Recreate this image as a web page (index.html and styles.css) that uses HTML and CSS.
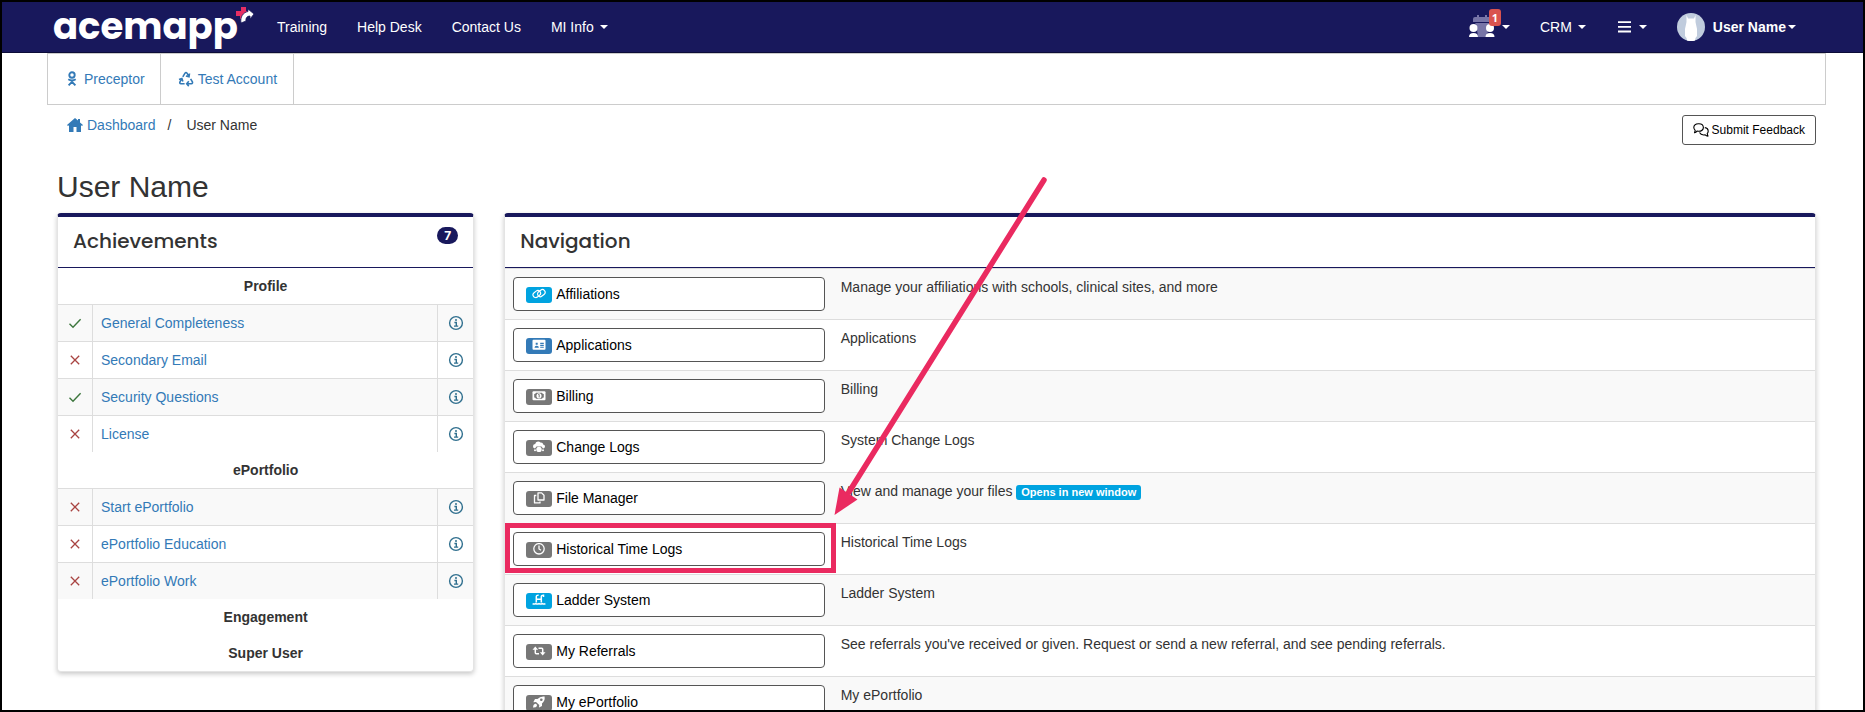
FILE: index.html
```html
<!DOCTYPE html>
<html lang="en">
<head>
<meta charset="utf-8">
<title>User Name - ACEMAPP</title>
<link rel="stylesheet" href="styles.css">
</head>
<body>
<svg class="sprite" aria-hidden="true">
  <symbol id="check" viewBox="0 0 14 14"><path d="M1.5 7.8 5 11.2 12.6 3.2" fill="none" stroke="currentColor" stroke-width="1.4"/></symbol>
  <symbol id="cross" viewBox="0 0 14 14"><path d="M2.8 2.8 11.2 11.2M11.2 2.8 2.8 11.2" fill="none" stroke="currentColor" stroke-width="1.3"/></symbol>
  <symbol id="info" viewBox="0 0 16 16"><g fill="none" stroke="currentColor" stroke-width="1.4"><circle cx="8" cy="8" r="6.4"/><path d="M6.4 7.5H8.3V11M6 11.1H10.2"/></g><circle cx="8" cy="5" r="1" fill="currentColor"/></symbol>
</svg>
<div class="page">
  <nav class="navbar">
    <a class="brand" href="#" aria-label="acemapp"><span>acemapp</span><svg width="18" height="16" viewBox="0 0 18 16"><path d="M5 0h5v4h3v3H9v5H4V9H0V4h5z" fill="#e62e63"/><path d="M5 16C4 10 7 5.500 12 4.500V2l6 5-4 5V9C11 9 9.500 11 10 14z" fill="#fff" stroke="#18185c" stroke-width=".8"/></svg></a>
    <div class="menu">
      <a href="#">Training</a><a href="#">Help Desk</a><a href="#">Contact Us</a><a href="#">MI Info <i class="caret"></i></a>
    </div>
    <div class="menu menu-right">
      <a class="meetings" href="#" aria-label="Meetings"><svg width="28" height="24" viewBox="0 0 28 24"><path d="M5 4Q5 2 7 2h2V0h2v2h6V0h2v2h2q2 0 2 2v3H5zM7 8h15q-4 3-2 7l-1 7H10L9 15q1-4-2-7z" fill="#7775a7"/><g fill="#fff"><circle cx="5.500" cy="13" r="4"/><path d="M1 22q0-4 4.500-4t4.500 4z"/><circle cx="22" cy="13" r="4"/><path d="M17.500 22q0-4 4.500-4t4.500 4z"/></g></svg><span class="count">1</span><i class="caret"></i></a>
      <a href="#">CRM <i class="caret"></i></a>
      <a class="bars" href="#" aria-label="More"><svg width="13" height="12" viewBox="0 0 13 12"><path d="M0 1.200h13M0 5.800h13M0 10.500h13" stroke="#fff" stroke-width="1.800"/></svg><i class="caret"></i></a>
      <a class="account" href="#"><svg width="28" height="28" viewBox="0 0 28 28"><circle cx="14" cy="14" r="14" fill="#c0ccdd"/><path d="M9.500 2v7L8 16v7q2 1.500 2 4.500 4 1 8 0 0-3 2-4.500v-7L18.500 9V2L17 5.500h-6z" fill="#fff"/></svg><b>User Name</b><i class="caret"></i></a>
    </div>
  </nav>
  <main class="content">
    <div class="tabs">
      <a href="#"><svg width="18" height="16" viewBox="0 0 18 16"><g fill="none" stroke="currentColor" stroke-width="1.900"><circle cx="9" cy="4" r="2.700"/><path d="M5.300 8.300Q9 10.800 12.700 8.300M9 9.600v1M5.600 14.300 9 10.800l3.400 3.500"/></g></svg>Preceptor</a>
      <a href="#"><svg width="18" height="16" viewBox="0 0 18 16"><g fill="none" stroke="currentColor" stroke-width="1.600"><path d="M5.800 5.800 8 2.200q1-1.400 2 0l1.800 3M12.500 2.500 12 5.800 8.900 5M13.600 7.800l1.800 3q.6 1.700-1.100 1.900H10M11.800 10.300 9.700 12.700l2.100 2.400M7.600 12.700H4q-1.800-.2-1-1.900l1.700-2.900M2 8.600l2.900-1 1 3"/></g></svg>Test Account</a>
    </div>
    <div class="toolbar">
      <div class="crumbs">
        <a href="#"><svg width="16" height="14" viewBox="0 0 16 14"><path d="M8 0 0 7l1 1 1-.7V14h4.500V9h3v5H14V7.300l1 .7 1-1-3-2.600V1h-2v1.600z" fill="currentColor"/></svg>Dashboard</a><span>/</span><span>User Name</span>
      </div>
      <button class="feedback" type="button"><svg width="16" height="14" viewBox="0 0 16 14"><g fill="none" stroke="currentColor" stroke-width="1.100" stroke-linejoin="round"><path d="M1.500 9.800 2.200 7.300Q.8 6 .8 4.600.8 1 5.500.8t4.900 3.800Q10.200 8.200 5.500 8.300L4 8.100Q3 9.400 1.500 9.800z"/><path d="M11.800 4.600q3.400.5 3.400 3.600 0 1.300-1 2.400l.8 2.500q-1.800-.2-2.800-1.300-4.200.7-5.700-2.200"/></g></svg>Submit Feedback</button>
    </div>
    <h1>User Name</h1>
    <div class="columns">
      <div class="col-side">
        <section class="panel">
          <header><h2>Achievements</h2><span class="pill">7</span></header>
          <table class="goals">
            <tbody>
              <tr><th colspan="3">Profile</th></tr>
              <tr class="odd"><td class="ok"><svg><use href="#check"/></svg></td><td><a href="#">General Completeness</a></td><td class="tip"><svg><use href="#info"/></svg></td></tr>
              <tr><td class="no"><svg><use href="#cross"/></svg></td><td><a href="#">Secondary Email</a></td><td class="tip"><svg><use href="#info"/></svg></td></tr>
              <tr class="odd"><td class="ok"><svg><use href="#check"/></svg></td><td><a href="#">Security Questions</a></td><td class="tip"><svg><use href="#info"/></svg></td></tr>
              <tr><td class="no"><svg><use href="#cross"/></svg></td><td><a href="#">License</a></td><td class="tip"><svg><use href="#info"/></svg></td></tr>
            </tbody>
            <tbody>
              <tr><th colspan="3">ePortfolio</th></tr>
              <tr class="odd"><td class="no"><svg><use href="#cross"/></svg></td><td><a href="#">Start ePortfolio</a></td><td class="tip"><svg><use href="#info"/></svg></td></tr>
              <tr><td class="no"><svg><use href="#cross"/></svg></td><td><a href="#">ePortfolio Education</a></td><td class="tip"><svg><use href="#info"/></svg></td></tr>
              <tr class="odd"><td class="no"><svg><use href="#cross"/></svg></td><td><a href="#">ePortfolio Work</a></td><td class="tip"><svg><use href="#info"/></svg></td></tr>
            </tbody>
            <tbody>
              <tr><th colspan="3">Engagement</th></tr>
              <tr><th colspan="3">Super User</th></tr>
            </tbody>
          </table>
        </section>
      </div>
      <div class="col-main">
        <section class="panel">
          <header><h2>Navigation</h2></header>
          <table class="links">
            <tbody>
              <tr><td><a class="btn" href="#"><span class="tag sky"><svg viewBox="0 0 14 12"><g fill="none" stroke="#fff" stroke-width="1.200"><rect x=".8" y="3.200" width="8" height="5.400" rx="2.700" transform="rotate(-38 5 6)"/><rect x="5.200" y="2.600" width="8" height="5.400" rx="2.700" transform="rotate(-38 9 5)"/></g></svg></span>Affiliations</a></td><td>Manage your affiliations with schools, clinical sites, and more</td></tr>
              <tr><td><a class="btn" href="#"><span class="tag blue"><svg viewBox="0 0 14 12"><rect x=".5" y=".7" width="13" height="10" rx="1" fill="#fff"/><path d="M3.700 3.800h2v2h-2zM2.500 8.700q0-1.900 2.200-1.900t2.200 1.900zM8.200 3.800h3.600v1.100H8.200zM8.200 5.800h3.600v1.100H8.200zM8.200 7.800h3.600v.9H8.200z" fill="#337ab7"/></svg></span>Applications</a></td><td>Applications</td></tr>
              <tr><td><a class="btn" href="#"><span class="tag"><svg viewBox="0 0 14 12"><rect x=".5" y="1.200" width="13" height="9" rx="1" fill="#fff"/><path d="M2.200 4Q3.500 4 4 2.800h6q.5 1.200 1.800 1.200v3.600q-1.300 0-1.800 1.200H4Q3.500 7.600 2.200 7.600z" fill="#777"/><ellipse cx="7" cy="5.800" rx="2.500" ry="2.600" fill="#fff"/><path d="M6.300 4.500H7.200V7.400" fill="none" stroke="#777"/></svg></span>Billing</a></td><td>Billing</td></tr>
              <tr><td><a class="btn" href="#"><span class="tag"><svg viewBox="0 0 14 12"><path d="M3 7.500Q.7 7 1 5t2.200-2Q3.500.4 6 .4q1.700 0 2.400 1.200Q11 1.300 11.200 3.500 13.300 4 13 5.800T11 7.500L9.500 5.600h-5z" fill="#fff"/><circle cx="7" cy="8.400" r="2.700" fill="#fff"/><circle cx="3" cy="9.300" r="1" fill="#fff"/><circle cx="11" cy="9.300" r="1" fill="#fff"/></svg></span>Change Logs</a></td><td>System Change Logs</td></tr>
              <tr><td><a class="btn" href="#"><span class="tag"><svg viewBox="0 0 14 12"><g fill="none" stroke="#fff" stroke-width="1.300" stroke-linejoin="round"><path d="M6 .9h3.600L12 3.200V8H6z"/><path d="M4.300 3.500H2.500v7.400H8V9.500"/></g></svg></span>File Manager</a></td><td>View and manage your files <span class="note">Opens in new window</span></td></tr>
              <tr><td class="target"><a class="btn" href="#"><span class="tag"><svg viewBox="0 0 14 12"><g fill="none" stroke="#fff" stroke-width="1.300"><circle cx="7" cy="5.800" r="5.200"/><path d="M7 2.600V6L9 7.300"/></g></svg></span>Historical Time Logs</a><svg class="arrow" width="220" height="345" viewBox="0 0 220 345" aria-hidden="true"><path d="M211 7 16 319" stroke="#ea2a60" stroke-width="5.500" stroke-linecap="round"/><path d="M1.500 342 6.500 314.500 24.500 326.500z" fill="#ea2a60"/></svg></td><td>Historical Time Logs</td></tr>
              <tr><td><a class="btn" href="#"><span class="tag sky"><svg viewBox="0 0 14 12"><path d="M4.300 8.500V2.800Q4.300 1 6.600 1.200M9.300 8.500V2.800Q9.300 1 11.500 1.200V3M4.300 5.300h5" fill="none" stroke="#fff" stroke-width="1.500"/><path d="M.6 9.600q1.600 1 3.200 0 1.600 1 3.200 0 1.600 1 3.200 0 1.600 1 3.200 0" fill="none" stroke="#fff" stroke-width="1.500"/></svg></span>Ladder System</a></td><td>Ladder System</td></tr>
              <tr><td><a class="btn" href="#"><span class="tag"><svg viewBox="0 0 14 12"><path d="M3.300 3v4.700q0 1 1 1H7M10.700 9V4.300q0-1-1-1H6.500" fill="none" stroke="#fff" stroke-width="1.500"/><path d="M.5 4.700 3.300 1.600l2.800 3.100zM7.900 7.300l2.800 3.100 2.800-3.100z" fill="#fff"/></svg></span>My Referrals</a></td><td>See referrals you've received or given. Request or send a new referral, and see pending referrals.</td></tr>
              <tr><td><a class="btn" href="#"><span class="tag"><svg viewBox="0 0 14 12"><path d="M12.600.5Q8 0 5.500 3H3L1.300 6.300 4 6 7.300 9 7 11.600 10 10V7.500Q13.200 4.800 12.600.5zM1 11.500Q1 8.300 3 7.800T5 10Q4 11.600 1 11.500z" fill="#fff"/><circle cx="9.300" cy="3.800" r="1.300" fill="#777"/></svg></span>My ePortfolio</a></td><td>My ePortfolio</td></tr>
            </tbody>
          </table>
        </section>
      </div>
    </div>
  </main>
</div>
</body>
</html>
```
FILE: styles.css
```css
* { box-sizing: border-box; }
body {
  margin: 0;
  background: #fff;
  color: #333;
  font: 14px/20px "Liberation Sans", Arial, sans-serif;
}
a { color: #337ab7; text-decoration: none; }
svg { flex: none; }
.sprite { position: absolute; width: 0; height: 0; }
.page { height: 100vh; overflow: hidden; border: 2px solid #000; }

.navbar {
  display: flex;
  height: 51px;
  padding: 0 52px 0 51px;
  background: #18185c;
  border-bottom: 1px solid #0c0c38;
}
.brand {
  display: flex;
  align-items: flex-start;
  width: 202px;
  color: #fff;
  font: 700 37px/48px Poppins, Inter, sans-serif;
}
.brand svg { margin: 5px 0 0 -2px; }
.menu { display: flex; align-items: center; margin-left: 7px; }
.menu a { display: flex; align-items: center; padding: 0 15px; color: #fff; }
.menu-right { margin-left: auto; }
.caret {
  margin-left: 6px;
  border: 4px solid transparent;
  border-top-color: currentColor;
  border-bottom: 0;
}
.meetings { position: relative; }
.count {
  position: absolute;
  left: 36px;
  top: -6px;
  width: 12px;
  border-radius: 3px;
  background: #d9534f;
  font: 700 11px/17px "Open Sans", sans-serif;
  text-align: center;
}
.bars { gap: 2px; margin-left: 2px; }
.menu .account { padding-left: 15px; }
.account .caret { margin-left: 2px; }
.account b { margin-left: 8px; }

.content { padding: 0 32px 0 40px; }
.tabs {
  display: flex;
  height: 52px;
  margin: 0 5px;
  border: 1px solid #ccc;
}
.tabs a {
  display: flex;
  align-items: center;
  gap: 3px;
  padding: 0 15px;
  border-right: 1px solid #ccc;
}
.tabs a + a { padding: 0 16px; }
.toolbar {
  display: flex;
  justify-content: space-between;
  padding: 10px 15px 25px;
}
.crumbs { display: flex; padding-left: 10px; }
.crumbs a { display: flex; align-items: center; gap: 4px; height: 20px; }
.crumbs span:nth-child(2) { margin: 0 15px 0 12px; }
.feedback {
  display: flex;
  align-items: center;
  gap: 3px;
  height: 30px;
  padding: 0 10px;
  border: 1px solid #555;
  border-radius: 3px;
  background: #fff;
  color: #000;
  font: 12px/18px "Liberation Sans", Arial, sans-serif;
}
h1 { margin: 0 15px 10px; font-size: 30px; line-height: 33px; font-weight: 400; }

.columns { display: flex; }
.col-side { width: 25%; padding: 0 15px; }
.col-main { width: 75%; padding: 0 15px; }
.panel {
  border: 1px solid #e4e4e4;
  border-top: 4px solid #18185c;
  border-radius: 4px;
  background: #fff;
  box-shadow: 0 2px 5px rgba(0, 0, 0, .22);
}
.panel header {
  display: flex;
  justify-content: space-between;
  height: 51px;
  padding: 10px 15px;
  border-bottom: 1px solid #18185c;
}
h2 { margin: 0; font: 500 20px/28px Poppins, Inter, sans-serif; }
.pill {
  height: 17px;
  padding: 0 7px;
  border-radius: 9px;
  background: #18185c;
  color: #fff;
  font: 700 12px/17px Inter, sans-serif;
}
table { width: 100%; border-spacing: 0; }
td { padding: 8px; border-top: 1px solid #ddd; vertical-align: top; }
.goals th { padding: 8px; }
.goals td:first-child { width: 35px; border-right: 1px solid #ddd; }
.goals td:last-child { width: 36px; border-left: 1px solid #ddd; }
.goals svg { display: block; width: 14px; height: 14px; margin: 3px auto; }
.goals .tip svg { width: 16px; height: 16px; margin: 2px auto; }
.goals .odd, .links tr:nth-child(odd) { background: #f9f9f9; }
.ok { color: #3c763d; }
.no { color: #a94442; }
.tip { color: #31708f; }

.links td:first-child { width: 25%; }
.btn {
  display: flex;
  align-items: center;
  gap: 4px;
  height: 34px;
  padding: 0 12px;
  border: 1px solid #555;
  border-radius: 4px;
  background: #fff;
  color: #000;
}
.tag {
  display: flex;
  justify-content: center;
  width: 26px;
  height: 16px;
  margin-top: 2px;
  border-radius: 3px;
  background: #777;
}
.tag svg { width: 14px; height: 12px; margin-top: 1px; }
.sky { background: #00a3e0; }
.blue { background: #337ab7; }
.note {
  display: inline-block;
  padding: 0 5px;
  border-radius: 3px;
  background: #00a3e0;
  color: #fff;
  font-size: 11px;
  font-weight: 700;
  line-height: 15px;
}
.target { position: relative; }
.target::after {
  content: "";
  position: absolute;
  inset: -1px -3px 1px 0;
  border: 5px solid #ea2a60;
  pointer-events: none;
}
.arrow {
  position: absolute;
  z-index: 1;
  left: 100%;
  bottom: calc(100% + 6px);
  pointer-events: none;
}
```
